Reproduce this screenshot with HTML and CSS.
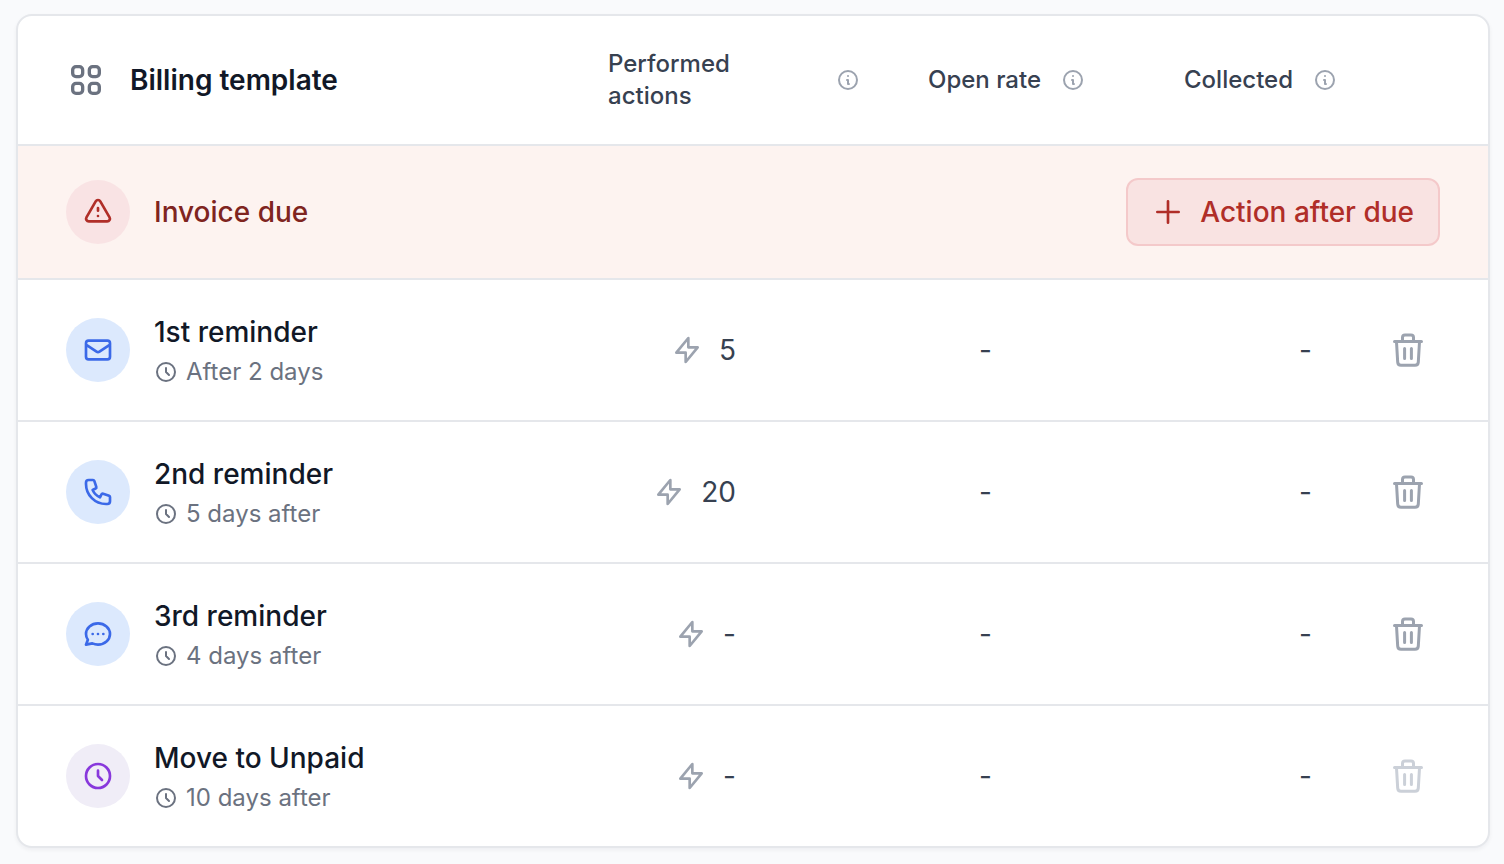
FILE: index.html
```html
<!DOCTYPE html>
<html lang="en">
<head>
	<meta charset="UTF-8">
	<meta name="viewport" content="width=device-width, initial-scale=1">
	<title>Billing template</title>
	<link rel="stylesheet" href="styles.css">
</head>
<body>
	<!-- shared icons -->
	<svg class="sprite" aria-hidden="true">
		<symbol id="clock" viewBox="0 0 24 24"><path d="M12 8v4l3 3m6-3a9 9 0 11-18 0 9 9 0 0118 0z"/></symbol>
		<symbol id="info" viewBox="0 0 24 24"><path d="M13 16h-1v-4h-1m1-4h.01M21 12a9 9 0 11-18 0 9 9 0 0118 0z"/></symbol>
		<symbol id="bolt" viewBox="0 0 24 24"><path d="M13 10V3L4 14h7v7l9-11h-7z"/></symbol>
		<symbol id="trash" viewBox="0 0 40 40"><path d="M6.500 11.500h27M14.500 11V7.500A2.500 2.500 0 0117 5h6a2.500 2.500 0 012.500 2.500V11M8.500 12l1.200 20.200a3.300 3.300 0 003.300 3.100h14a3.300 3.300 0 003.300-3.100L31.500 12M16.600 18.500v10M23.400 18.500v10"/></symbol>
	</svg>

	<main class="card">
		<table class="template">
			<colgroup>
				<col>
				<col class="col-actions">
				<col class="col-rate">
				<col class="col-collected">
				<col class="col-delete">
			</colgroup>
			<thead>
				<tr>
					<th scope="col">
						<div class="heading">
							<svg class="icon icon-grid" viewBox="0 0 24 24"><path d="M4 6a2 2 0 012-2h2a2 2 0 012 2v2a2 2 0 01-2 2H6a2 2 0 01-2-2V6zM14 6a2 2 0 012-2h2a2 2 0 012 2v2a2 2 0 01-2 2h-2a2 2 0 01-2-2V6zM4 16a2 2 0 012-2h2a2 2 0 012 2v2a2 2 0 01-2 2H6a2 2 0 01-2-2v-2zM14 16a2 2 0 012-2h2a2 2 0 012 2v2a2 2 0 01-2 2h-2a2 2 0 01-2-2v-2z"/></svg>
							<span>Billing template</span>
						</div>
					</th>
					<th scope="col"><div class="label"><span class="label-wrap">Performed actions</span><svg class="icon icon-info"><use href="#info"/></svg></div></th>
					<th scope="col"><div class="label"><span>Open rate</span><svg class="icon icon-info"><use href="#info"/></svg></div></th>
					<th scope="col"><div class="label"><span>Collected</span><svg class="icon icon-info"><use href="#info"/></svg></div></th>
					<td></td>
				</tr>
			</thead>
			<tbody>
				<tr class="due">
					<td colspan="5">
						<div class="due-bar">
							<div class="step">
								<span class="badge badge-red"><svg class="icon" viewBox="0 0 24 24"><path d="M12 9v2m0 4h.01m-6.938 4h13.856c1.54 0 2.502-1.667 1.732-3L13.732 4c-.77-1.333-2.694-1.333-3.464 0L3.34 16c-.77 1.333.192 3 1.732 3z"/></svg></span>
								<span class="due-title">Invoice due</span>
							</div>
							<button type="button" class="add"><svg class="icon" viewBox="0 0 24 24"><path d="M12 4v16m8-8H4"/></svg>Action after due</button>
						</div>
					</td>
				</tr>
				<tr>
					<td>
						<div class="step">
							<span class="badge badge-blue"><svg class="icon" viewBox="0 0 24 24"><path d="M3 8l7.89 5.26a2 2 0 002.22 0L21 8M5 19h14a2 2 0 002-2V7a2 2 0 00-2-2H5a2 2 0 00-2 2v10a2 2 0 002 2z"/></svg></span>
							<div>
								<div class="title">1st reminder</div>
								<div class="delay"><svg class="icon"><use href="#clock"/></svg>After 2 days</div>
							</div>
						</div>
					</td>
					<td><div class="value"><svg class="icon"><use href="#bolt"/></svg>5</div></td>
					<td><div class="value value-rate">-</div></td>
					<td><div class="value">-</div></td>
					<td><button type="button" class="delete" aria-label="Delete 1st reminder"><svg class="icon"><use href="#trash"/></svg></button></td>
				</tr>
				<tr>
					<td>
						<div class="step">
							<span class="badge badge-blue"><svg class="icon" viewBox="0 0 24 24"><path d="M3 5a2 2 0 012-2h3.28a1 1 0 01.948.684l1.498 4.493a1 1 0 01-.502 1.21l-2.257 1.13a11.042 11.042 0 005.516 5.516l1.13-2.257a1 1 0 011.21-.502l4.493 1.498a1 1 0 01.684.949V19a2 2 0 01-2 2h-1C9.716 21 3 14.284 3 6V5z"/></svg></span>
							<div>
								<div class="title">2nd reminder</div>
								<div class="delay"><svg class="icon"><use href="#clock"/></svg>5 days after</div>
							</div>
						</div>
					</td>
					<td><div class="value"><svg class="icon"><use href="#bolt"/></svg>20</div></td>
					<td><div class="value value-rate">-</div></td>
					<td><div class="value">-</div></td>
					<td><button type="button" class="delete" aria-label="Delete 2nd reminder"><svg class="icon"><use href="#trash"/></svg></button></td>
				</tr>
				<tr>
					<td>
						<div class="step">
							<span class="badge badge-blue"><svg class="icon" viewBox="0 0 24 24"><path d="M8 12h.01M12 12h.01M16 12h.01M21 12c0 4.418-4.03 8-9 8a9.863 9.863 0 01-4.255-.949L3 20l1.395-3.72C3.512 15.042 3 13.574 3 12c0-4.418 4.03-8 9-8s9 3.582 9 8z"/></svg></span>
							<div>
								<div class="title">3rd reminder</div>
								<div class="delay"><svg class="icon"><use href="#clock"/></svg>4 days after</div>
							</div>
						</div>
					</td>
					<td><div class="value"><svg class="icon"><use href="#bolt"/></svg>-</div></td>
					<td><div class="value value-rate">-</div></td>
					<td><div class="value">-</div></td>
					<td><button type="button" class="delete" aria-label="Delete 3rd reminder"><svg class="icon"><use href="#trash"/></svg></button></td>
				</tr>
				<tr>
					<td>
						<div class="step">
							<span class="badge badge-purple"><svg class="icon"><use href="#clock"/></svg></span>
							<div>
								<div class="title">Move to Unpaid</div>
								<div class="delay"><svg class="icon"><use href="#clock"/></svg>10 days after</div>
							</div>
						</div>
					</td>
					<td><div class="value"><svg class="icon"><use href="#bolt"/></svg>-</div></td>
					<td><div class="value value-rate">-</div></td>
					<td><div class="value">-</div></td>
					<td><button type="button" class="delete" aria-label="Delete Move to Unpaid" disabled><svg class="icon"><use href="#trash"/></svg></button></td>
				</tr>
			</tbody>
		</table>
	</main>
</body>
</html>
```

FILE: styles.css
```css
*{
	box-sizing: border-box;
	margin:0;
	padding:0;
}

body {
	padding: 14px 14px 16px 16px;
	background: #f9fafc;
	font-family: Inter, "Liberation Sans", sans-serif;
	font-size: 28px;
	line-height: 40px;
	color: #374151;
}

.sprite {
	display: none;
}

.icon {
	display: block;
	flex: none;
	width: 32px;
	height: 32px;
	fill: none;
	stroke: currentColor;
	stroke-width: 2;
	stroke-linecap: round;
	stroke-linejoin: round;
}

.card {
	overflow: hidden;
	border: 2px solid #e5e7eb;
	border-radius: 16px;
	background: #fff;
	box-shadow: 0 2px 4px rgba(17, 24, 39, .05);
}

/* table */
.template {
	width: 100%;
	table-layout: fixed;
	border-collapse: separate;
	border-spacing: 0;
}

.col-actions {
	width: 320px;
}

.col-rate {
	width: 256px;
}

.col-collected {
	width: 192px;
}

.col-delete {
	width: 112px;
}

th {
	text-align: left;
	font-weight: 500;
}

thead th,
thead td {
	height: 130px;
	border-bottom: 2px solid #e5e7eb;
}

tbody td {
	height: 142px;
	border-bottom: 2px solid #e5e7eb;
	vertical-align: middle;
}

tbody tr:last-child td {
	height: 140px;
	border-bottom: 0;
}

.due td {
	height: 134px;
	background: #fdf3f0;
}

/* header */
.heading {
	display: flex;
	align-items: center;
	gap: 24px;
	padding-left: 48px;
	font-weight: 600;
	color: #111827;
}

.icon-grid {
	width: 40px;
	height: 40px;
	color: #6b7280;
}

.label {
	display: flex;
	align-items: center;
	gap: 20px;
	font-size: 24px;
	line-height: 32px;
}

.label-wrap {
	width: 208px;
}

.icon-info {
	width: 24px;
	height: 24px;
	color: #9ca3af;
}

/* invoice due */
.due-bar {
	display: flex;
	align-items: center;
	justify-content: space-between;
	padding-right: 48px;
}

.due-title {
	font-weight: 500;
	color: #7f2420;
}

.add {
	display: flex;
	align-items: center;
	gap: 16px;
	height: 68px;
	padding: 0 24px;
	border: 2px solid #f4c9ca;
	border-radius: 12px;
	background: #f9e3e2;
	font: inherit;
	font-weight: 500;
	color: #b02e28;
	cursor: pointer;
}

/* steps */
.step {
	display: flex;
	align-items: center;
	gap: 24px;
	padding-left: 48px;
}

.badge {
	display: flex;
	align-items: center;
	justify-content: center;
	flex: none;
	width: 64px;
	height: 64px;
	border-radius: 50%;
}

.badge-red {
	background: #f9e3e4;
	color: #b02e28;
}

.badge-blue {
	background: #dce9fd;
	color: #3b69e8;
}

.badge-purple {
	background: #f0edf7;
	color: #8838dc;
}

.title {
	font-weight: 500;
	color: #111827;
}

.delay {
	display: flex;
	align-items: center;
	gap: 8px;
	margin-top: 4px;
	font-size: 24px;
	line-height: 32px;
	color: #6b7280;
}

.delay .icon {
	width: 24px;
	height: 24px;
}

.value {
	display: flex;
	align-items: center;
	justify-content: flex-end;
	gap: 16px;
	width: 128px;
}

.value .icon {
	color: #9ca3af;
}

.value-rate {
	width: 64px;
}

.delete {
	display: flex;
	align-items: center;
	justify-content: center;
	width: 64px;
	height: 64px;
	border: 0;
	background: none;
	color: #9ca3af;
	cursor: pointer;
}

.delete .icon {
	width: 40px;
	height: 40px;
	stroke-width: 3;
}

.delete:disabled {
	color: #cbd0d8;
	cursor: default;
}
```
